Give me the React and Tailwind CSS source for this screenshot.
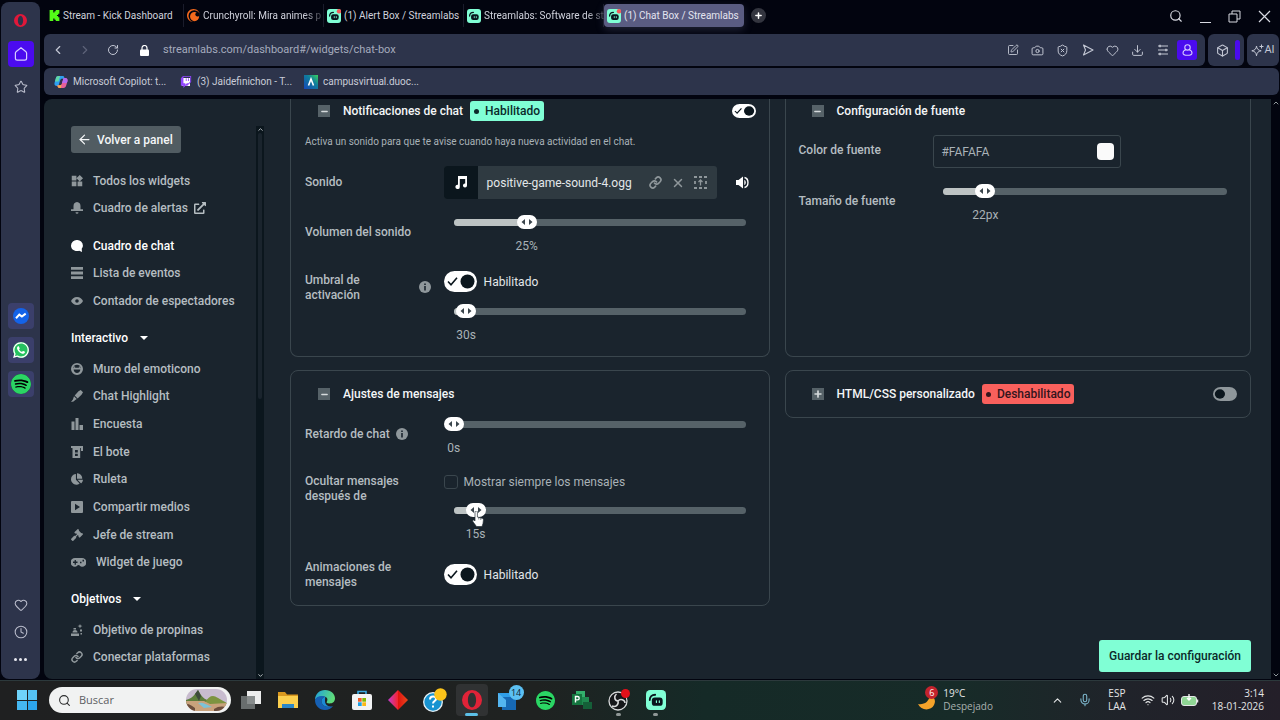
import { useState } from 'react'
import { SiKick, SiCrunchyroll, SiTwitch, SiSpotify } from 'react-icons/si'
import { FaChartPie, FaGavel, FaExternalLinkAlt, FaWhatsapp } from 'react-icons/fa'
import { MdWidgets } from 'react-icons/md'
import {
  ArrowLeft, Box, Camera, ChevronLeft, ChevronRight, ChevronUp, ChevronDown, Clock, Download, Heart,
  Link, Mic, Minus, Plus, RotateCw, Search, ShieldX, SquarePen, Star, Volume2, Wifi, X,
} from 'lucide-react'

/* ---------- Icons ---------- */

function OperaIcon({ size, color = '#e0183a' }) {
  return (
    <svg width={size} height={size} viewBox="0 0 24 24" fill={color} fillRule="evenodd">
      <path d="M12 0a12 12 0 1 0 0 24a12 12 0 1 0 0-24zM12 3.2c3 0 4.9 4 4.9 8.8s-1.900 8.800-4.900 8.800s-4.900-4-4.900-8.800s1.900-8.800 4.900-8.800z" />
    </svg>
  )
}

function StreamlabsIcon({ size, dot }) {
  return (
    <svg width={size} height={size} viewBox="0 0 24 24" fill="none" className="shrink-0">
      <rect width="24" height="24" rx="5" fill="#80ffd5" />
      <path d="M4.500 12c0-4 2.500-6.300 6.500-6.300" stroke="#09161d" strokeWidth="2.200" strokeLinecap="round" />
      <rect x="7" y="9" width="13" height="10" rx="3.500" fill="#09161d" />
      <path d="M12.500 13v2M16 13v2" stroke="#80ffd5" strokeWidth="1.400" strokeLinecap="round" />
      {dot && <circle cx="20.500" cy="4" r="3.800" fill="#f25c5c" />}
    </svg>
  )
}

function CopilotIcon() {
  return (
    <svg width="14" height="14" viewBox="0 0 14 14" className="shrink-0">
      <path d="M4.500 1h4.200c1 0 1.400.7 1.700 1.700l.3 1H8c-1 0-1.500.6-1.800 1.500L4.400 11H3C.8 11 0 9.500.6 7.400l1.200-4C2.300 1.700 3 1 4.500 1z" fill="#2f9ff0" />
      <path d="M1 6.500L1.800 3.400C2.300 1.700 3 1 4.500 1h1.700L4.500 6.500z" fill="#62d6a6" />
      <path d="M9.500 13H5.300c-1 0-1.400-.7-1.700-1.700l-.3-1H6c1 0 1.500-.6 1.800-1.500L9.600 3H11c2.200 0 3 1.500 2.400 3.600l-1.200 4c-.5 1.700-1.200 2.400-2.700 2.400z" fill="#e65f9a" />
      <path d="M9.600 3H11c2.200 0 3 1.500 2.400 3.600L12.800 8H8z" fill="#b26af0" />
      <path d="M3.300 10.300H6c.8 0 1.300-.4 1.600-1L7 13H5.300c-1 0-1.400-.7-1.700-1.700z" fill="#f6a94c" />
    </svg>
  )
}

function CampusIcon() {
  return (
    <svg width="14" height="14" viewBox="0 0 14 14">
      <defs>
        <linearGradient id="campus" x1="0" y1="1" x2="1" y2="0">
          <stop offset="0" stopColor="#1646b8" />
          <stop offset="0.600" stopColor="#0f7f9c" />
          <stop offset="1" stopColor="#3bd35c" />
        </linearGradient>
      </defs>
      <rect width="14" height="14" fill="url(#campus)" />
      <path d="M4.500 10.500L7 4l2.500 6.500" fill="none" stroke="#fff" strokeWidth="1.600" />
    </svg>
  )
}

// small filled glyphs of the widget menu
const glyphs = {
  bell: <path d="M6 0a4 4 0 0 1 3.500 4v3.200H12V9H0V7.200h2.500V4A4 4 0 0 1 6 0zM4.500 10.200h3a1.500 1.500 0 0 1-3 0z" />,
  chat: <path d="M6 0a5.700 5.700 0 0 1 5.900 5.500c0 1.500-.5 2.400-1.200 3.300L11 12l-2.700-1.300C3.500 12 0 9.300 0 5.500A5.800 5.800 0 0 1 6 0z" />,
  list: <path d="M0 0h12v2.800H0zM0 4.600h12v2.800H0zM0 9.200h12v2.800H0z" />,
  eye: <path fillRule="evenodd" d="M6 2c3 0 5 1.800 6 4-1 2.200-3 4-6 4S1 8.200 0 6c1-2.200 3-4 6-4zM6 4.200a1.800 1.800 0 1 0 0 3.600a1.800 1.800 0 0 0 0-3.600z" />,
  smile: <path fillRule="evenodd" d="M6 0a6 6 0 1 0 0 12A6 6 0 0 0 6 0zM6 1.800a4.200 4.200 0 0 1 4 2.900H2a4.200 4.200 0 0 1 4-2.900zM2.500 3l2 1-2 1.200zM9.500 3l-2 1 2 1.200zM2.600 6.400h6.800c-.3 2.300-1.600 3.500-3.400 3.500s-3.100-1.200-3.400-3.500z" />,
  pen: <path d="M7.500 1.300L9.700 0 12 2.300 10.500 4.700 6.600 8.400 3.700 5.400zM3 6.200l2.800 2.800-1.600.9L2.500 11.500 0 12l1.900-2.400z" />,
  poll: <path d="M.5 3.500h3V12h-3zM4.500 0h3v12h-3zM8.500 7H12v5H8.500z" />,
  jar: <path fillRule="evenodd" d="M0 0h12v5h-2v-3H9.200V12H1.500V2H0zM4 4v2.500h2.800V4zM4 7.700V10h2.800V7.700z" />,
  media: <path fillRule="evenodd" d="M1 0h10a1 1 0 0 1 1 1v10a1 1 0 0 1-1 1H1a1 1 0 0 1-1-1V1a1 1 0 0 1 1-1zM4 2.800v6.400L9 6z" />,
  goal: <path d="M0 9.500h8V12H0zM1.500 8.500a2.500 2.500 0 0 1 5 0zM9 0l.7 1.600L11.500 2l-1.800.8L9 4.500l-.7-1.700L6.500 2l1.800-.4zM9 5.500h2v2H9zM2.500 4h2.500v1.500H2.500zM9.500 9h1.500v1.500H9.500z" />,
}

function Glyph({ name }) {
  return (
    <svg width="12" height="12" viewBox="0 0 12 12" fill="currentColor" className="shrink-0">
      {glyphs[name]}
    </svg>
  )
}

function GamepadGlyph() {
  return (
    <svg width="15" height="9" viewBox="0 0 15 9" className="shrink-0">
      <path fillRule="evenodd" fill="currentColor" d="M4 0h7a4.300 4.300 0 0 1 0 8.800C9.500 8.800 8.700 7 7.500 7S5.500 8.800 4 8.800A4.300 4.300 0 0 1 4 0zM3.600 2v1.600H2v1.500h1.600v1.600h1.300V5.100h1.600V3.600H4.900V2zM11.500 1.800v1.600h1.500V1.800zM9 3.700v1.600h1.500V3.700z" />
    </svg>
  )
}

function UploadGlyph() {
  return (
    <svg width="13" height="13" viewBox="0 0 13 13" fill="none" stroke="currentColor" strokeWidth="1.800">
      <path d="M0 1h3M5 1h3M10 1h3M0 12h3M5 12h3M10 12h3M1 5v3M12 5v3" />
      <path d="M6.500 9.500V4.500M4.500 6l2-2 2 2" strokeWidth="1.300" />
    </svg>
  )
}

function HandCursor() {
  return (
    <svg width="12" height="16" viewBox="0 0 12 16" className="absolute left-1/2 top-2 z-10 -translate-x-1/3 pointer-events-none">
      <path d="M3 1a1.200 1.200 0 0 1 2.400 0v5l4.600 1.200c1 .3 1.500.9 1.400 2L11 12.500 10 15.500H4.500L1 10.800C.3 9.600 1 8.700 2 9l1 .9z" fill="#fff" stroke="#26323a" strokeWidth=".7" />
      <path d="M6.800 6.500v2M8.800 7v2" stroke="#26323a" strokeWidth=".6" />
    </svg>
  )
}

/* ---------- Form controls ---------- */

function Toggle({ id, small, on, onChange, label }) {
  return (
    <span className="relative inline-flex shrink-0">
      <input id={id} type="checkbox" checked={on} onChange={onChange} aria-label={label} className="peer absolute inset-0 h-full w-full cursor-pointer opacity-0" />
      <svg className={small ? 'h-[14px] w-6 pointer-events-none' : 'h-[21px] w-[33px] pointer-events-none'} viewBox="0 0 33 21" preserveAspectRatio="none">
        <rect width="33" height="21" rx="10.500" fill={on ? '#fff' : '#8f979b'} />
        {on && <path d="M4 10.500l3 3.200 6-7" fill="none" stroke="#0b161d" strokeWidth="1.600" />}
        <circle cx={on ? 23.500 : 9.500} cy="10.500" r="7" fill="#0b161d" />
      </svg>
    </span>
  )
}

function Slider({ id, start, unit, max, cursor }) {
  const [value, setValue] = useState(start)
  const left = `${(value / max) * 100}%`
  return (
    <div className="relative px-[10px]">
      <input id={id} type="range" min="0" max={max} value={value} onChange={(e) => setValue(Number(e.target.value))} className="absolute inset-x-0 top-0 z-20 h-[14px] w-full cursor-pointer opacity-0" />
      <div className="relative flex h-[14px] items-center">
        <div className="h-[7px] w-full overflow-hidden rounded-full bg-[#566268]">
          <div className="h-full bg-[#bdc3c3]" style={{ width: left }} />
        </div>
        <div className="absolute flex h-[14px] w-5 -translate-x-1/2 items-center justify-center rounded-full bg-white" style={{ left }}>
          <svg width="12" height="6" viewBox="0 0 12 6" fill="#3a454c">
            <path d="M4 0v6L0.500 3zM8 0v6l3.500-3z" />
          </svg>
          {cursor && <HandCursor />}
        </div>
      </div>
      <div className="relative mt-[10px] h-[14px]">
        <output htmlFor={id} className="absolute -translate-x-1/2 text-xs leading-[15px] text-[#a9b2b7]" style={{ left }}>
          {value}{unit}
        </output>
      </div>
    </div>
  )
}

function InfoDot() {
  return (
    <svg width="12" height="12" viewBox="0 0 12 12" className="shrink-0">
      <circle cx="6" cy="6" r="6" fill="#8f979b" />
      <path d="M5.200 2.500h1.600v1.500H5.200zM5.200 5h1.600v4.500H5.200z" fill="#1a242d" />
    </svg>
  )
}

function CardHeader({ title, open = true, badge, badgeOn, children }) {
  return (
    <div className="flex h-6 items-center pl-[13px]">
      <button type="button" aria-label={title} className="flex h-3 w-3 items-center justify-center bg-[#566268] text-[#d5dadc]">
        {open ? <Minus size={9} strokeWidth={4} /> : <Plus size={10} strokeWidth={4} />}
      </button>
      <h2 className="ml-[13px] text-xs font-medium text-[#f4f6f7]">{title}</h2>
      {badge && (
        <span className={badgeOn ? 'ml-[7px] flex h-5 items-center gap-[6px] rounded-[3px] bg-[#80ffd5] px-1 text-xs font-medium text-[#0b2a2a]' : 'ml-[7px] flex h-5 items-center gap-[6px] rounded-[3px] bg-[#f9605c] px-1 text-xs font-medium text-[#33151c]'}>
          <i className="h-[5px] w-[5px] rounded-full bg-current" />
          {badge}
        </span>
      )}
      <span className="ml-auto flex">{children}</span>
    </div>
  )
}

const rowClass = 'grid grid-cols-[4fr_9fr]'
const labelClass = 'text-xs font-medium leading-[15px] text-[#b5bdc1]'

/* ---------- Browser chrome ---------- */

const tabs = [
  { icon: <SiKick size={11} color="#53fc18" className="ml-[2px] shrink-0" />, title: 'Stream - Kick Dashboard' },
  { icon: <SiCrunchyroll size={13} color="#f4691d" className="shrink-0" />, title: 'Crunchyroll: Mira animes p', faded: true },
  { icon: <StreamlabsIcon size={14} dot />, title: '(1) Alert Box / Streamlabs' },
  { icon: <StreamlabsIcon size={14} />, title: 'Streamlabs: Software de st', faded: true },
  { icon: <StreamlabsIcon size={14} dot />, title: '(1) Chat Box / Streamlabs', active: true },
]

function TabBar() {
  return (
    <div className="flex h-[34px] items-start pt-1">
      {tabs.map((tab) => (
        <button
          key={tab.title}
          type="button"
          className={tab.active
            ? 'flex h-[23px] w-[140px] items-center gap-[3px] rounded bg-[#5a5c82] pl-[3px] text-[#e4e5f0] shadow-[0_3px_8px_#5a5c8255]'
            : 'flex h-[23px] w-[140px] items-center gap-[3px] border-r border-[#1a1c2b] pl-[3px] text-[#d0d2dc]'}
        >
          {tab.icon}
          <span className={tab.faded
            ? 'whitespace-nowrap text-[10px] [mask-image:linear-gradient(to_right,#000_85%,#0004)]'
            : 'whitespace-nowrap text-[10px]'}
          >
            {tab.title}
          </span>
        </button>
      ))}
      <button type="button" aria-label="Nueva pestaña" className="ml-[7px] mt-1 flex h-[15px] w-[15px] items-center justify-center rounded-full bg-[#33353f] text-white">
        <Plus size={9} strokeWidth={4} />
      </button>
      <div className="ml-auto mr-[9px] mt-[5px] flex items-center gap-[17px] text-[#d8dae2]">
        <button type="button" aria-label="Buscar"><Search size={14} /></button>
        <button type="button" aria-label="Minimizar" className="flex h-[13px] items-end"><span className="h-px w-[11px] bg-[#d8dae2]" /></button>
        <button type="button" aria-label="Restaurar">
          <svg width="13" height="13" viewBox="0 0 13 13" fill="none" stroke="currentColor">
            <path d="M1 4h8v8H1zM4 4V1h8v8H9" />
          </svg>
        </button>
        <button type="button" aria-label="Cerrar">
          <svg width="13" height="13" viewBox="0 0 13 13" stroke="currentColor" strokeWidth="1.200"><path d="M1 1l11 11M12 1L1 12" /></svg>
        </button>
      </div>
    </div>
  )
}

function AddressBar() {
  const actions = [
    ['Editar', <SquarePen size={12} strokeWidth={1.8} />],
    ['Captura', <Camera size={13} strokeWidth={1.8} />],
    ['Bloqueador', <ShieldX size={13} strokeWidth={1.8} />],
    ['Flow', (
      <svg width="12" height="12" viewBox="0 0 12 12" fill="none" stroke="currentColor" strokeWidth="1.100" strokeLinejoin="round">
        <path d="M1.500 1L11 6l-9.500 5L3.500 6z" />
      </svg>
    )],
    ['Favorito', <Heart size={13} strokeWidth={1.8} />],
    ['Descargas', <Download size={13} strokeWidth={1.8} />],
    ['Ajustes', (
      <svg width="12" height="12" viewBox="0 0 12 12" fill="none" stroke="currentColor" strokeWidth="1.200">
        <path d="M1 2h10M1 6h10M1 10h10" />
        <path d="M3 .800v2.400M9 4.800v2.400M3 8.800v2.400" strokeWidth="1.500" />
      </svg>
    )],
  ]
  return (
    <div className="mr-px flex h-8 gap-[3px] text-[#c3c7d4]">
      <div className="flex flex-1 items-center rounded-md bg-[#2d344b] pl-[7px] pr-2">
        <button type="button" aria-label="Atrás"><ChevronLeft size={14} /></button>
        <button type="button" aria-label="Adelante" className="ml-[13px] text-[#5d6379]"><ChevronRight size={14} /></button>
        <button type="button" aria-label="Recargar" className="ml-[15px]"><RotateCw size={12} /></button>
        <svg width="9" height="11" viewBox="0 0 9 11" className="ml-[21px] shrink-0">
          <path d="M2 5V3a2.500 2.500 0 0 1 5 0v2" fill="none" stroke="#fff" strokeWidth="1.200" />
          <rect y="4.500" width="9" height="6.500" rx="1" fill="#fff" />
        </svg>
        <input aria-label="Dirección" defaultValue="streamlabs.com/dashboard#/widgets/chat-box" className="ml-[14px] min-w-0 flex-1 bg-transparent text-[11px] text-[#a5abbd] outline-none" />
        <div className="flex">
          {actions.map(([name, icon]) => (
            <button key={name} type="button" aria-label={name} className="flex w-[25px] justify-center">{icon}</button>
          ))}
        </div>
        <button type="button" aria-label="Perfil" className="ml-[2px] flex h-5 w-5 items-center justify-center rounded-[3px] bg-[#4b0bef]">
          <svg width="11" height="12" viewBox="0 0 11 12" fill="none" stroke="#d6ccff" strokeWidth="1.100">
            <circle cx="5.500" cy="3.400" r="2.700" />
            <path d="M3.800 5.800C2 6.300 1 7.500 1 9c0 1.700 1.500 2.300 4.500 2.300S10 10.700 10 9c0-1.500-1-2.700-2.800-3.200" />
          </svg>
        </button>
      </div>
      <div className="flex w-9 items-center justify-between rounded-md bg-[#2d344b] pl-2 pr-1">
        <Box size={13} />
        <span className="h-5 w-[5px] rounded-sm bg-[#4b0bef]" />
      </div>
      <button type="button" className="flex w-8 items-center justify-center rounded-md bg-[#2d344b] text-[11px]">
        <svg width="13" height="13" viewBox="0 0 13 13" fill="none" stroke="currentColor" strokeLinejoin="round" className="shrink-0">
          <path d="M5.500 2c.4 3 1.500 4.200 4.700 4.800-3.200.6-4.300 1.800-4.700 5-.4-3.200-1.500-4.400-4.700-5C4 6.200 5.100 5 5.500 2z" />
          <path d="M10.500.5v4M8.500 2.500h4" />
        </svg>
        AI
      </button>
    </div>
  )
}

function BookmarkBar() {
  return (
    <nav className="mr-px mt-0.5 flex h-[27px] items-center rounded-md bg-[#2d344b] pl-[10px] text-[10px] text-[#c9ccd8]">
      <a href="#copilot" className="flex w-[126px] items-center gap-[5px]"><CopilotIcon />Microsoft Copilot: t...</a>
      <a href="#twitch" className="flex w-[124px] items-center gap-[5px]">
        <span className="relative flex items-center justify-center text-[#9146ff]">
          <span className="absolute h-2 w-2 bg-white" />
          <SiTwitch size={12} className="relative" />
        </span>
        (3) Jaidefinichon - T...
      </a>
      <a href="#campus" className="flex items-center gap-[5px]"><CampusIcon />campusvirtual.duoc...</a>
    </nav>
  )
}

function OperaSidebar() {
  const tile = 'flex h-[26px] w-[26px] items-center justify-center rounded bg-[#3b3f6b]'
  return (
    <aside className="ml-px mt-0.5 mb-px flex w-[39px] flex-col items-center justify-between rounded-lg bg-[#2d344b] pb-[13px] pt-3 text-[#b9bccb]">
      <div className="flex flex-col items-center">
        <OperaIcon size={13} />
        <button type="button" aria-label="Inicio" className="mt-[14px] flex h-[26px] w-[26px] items-center justify-center rounded bg-[#4b0bef] text-[#d6ccff]">
          <svg width="14" height="14" viewBox="0 0 14 14" fill="none" stroke="currentColor" strokeWidth="1.200">
            <path d="M7 .8l5 4c.4.4.6.8.6 1.300v5.200c0 1.200-.7 1.900-1.900 1.900H3.300c-1.200 0-1.900-.7-1.900-1.900V6.100c0-.5.200-.9.600-1.300z" />
          </svg>
        </button>
        <button type="button" aria-label="Espacios" className="mt-[13px]"><Star size={14} strokeWidth={1.8} /></button>
      </div>
      <div className="flex flex-col gap-2 pt-2">
        <button type="button" aria-label="Messenger" className={tile}>
          <svg width="16" height="16" viewBox="0 0 16 16">
            <circle cx="8" cy="8" r="8" fill="#1463e8" />
            <path d="M3 10.200l3.300-3.600 2.600 2 3.800-3" fill="none" stroke="#fff" strokeWidth="2" />
          </svg>
        </button>
        <button type="button" aria-label="WhatsApp" className={tile}>
          <span className="flex h-4 w-4 items-center justify-center rounded-full bg-[#25c25f] text-white"><FaWhatsapp size={18} className="shrink-0" /></span>
        </button>
        <button type="button" aria-label="Spotify" className={tile}>
          <span className="rounded-full bg-black"><SiSpotify size={20} color="#2bd564" /></span>
        </button>
      </div>
      <div className="flex flex-col items-center gap-[13px]">
        <button type="button" aria-label="Favoritos"><Heart size={14} strokeWidth={1.8} /></button>
        <button type="button" aria-label="Historial"><Clock size={14} strokeWidth={1.8} /></button>
        <button type="button" aria-label="Más" className="flex h-[14px] items-center gap-[2px]">
          <i className="h-[3px] w-[3px] rounded-full bg-[#e8e9f0]" />
          <i className="h-[3px] w-[3px] rounded-full bg-[#e8e9f0]" />
          <i className="h-[3px] w-[3px] rounded-full bg-[#e8e9f0]" />
        </button>
      </div>
    </aside>
  )
}

/* ---------- Widget menu ---------- */

function MenuItem({ icon, active, children }) {
  return (
    <a href="#widget" className={active ? 'flex items-center gap-[10px] text-white' : 'flex items-center gap-[10px] text-[#b5bdc1]'}>
      <span className={active ? 'flex' : 'flex text-[#8f979b]'}>{icon}</span>
      <span className="flex items-center gap-[6px]">{children}</span>
    </a>
  )
}

function MenuHeading({ children }) {
  return (
    <button type="button" className="mt-[10px] flex h-[26px] items-center gap-3 text-white">
      {children}
      <svg width="8" height="4" viewBox="0 0 8 4" fill="currentColor"><path d="M0 0h8L4 4z" /></svg>
    </button>
  )
}

function WidgetMenu() {
  return (
    <div className="flex w-[220px] shrink-0 pl-[27px] pt-[27px]">
      <nav className="flex flex-1 flex-col items-start whitespace-nowrap text-xs font-medium">
        <button type="button" className="flex h-[27px] items-center gap-[5px] rounded-[3px] bg-[#515c62] pl-[6px] pr-2 text-[#f4f6f7]">
          <ArrowLeft size={15} />Volver a panel
        </button>
        <div className="mt-[14px] grid h-[55px] auto-rows-fr">
          <MenuItem icon={<MdWidgets size={14} className="-mx-px" />}>Todos los widgets</MenuItem>
          <MenuItem icon={<Glyph name="bell" />}>Cuadro de alertas <FaExternalLinkAlt size={12} /></MenuItem>
        </div>
        <div className="mt-[10px] grid h-[83px] auto-rows-fr">
          <MenuItem active icon={<Glyph name="chat" />}>Cuadro de chat</MenuItem>
          <MenuItem icon={<Glyph name="list" />}>Lista de eventos</MenuItem>
          <MenuItem icon={<Glyph name="eye" />}>Contador de espectadores</MenuItem>
        </div>
        <MenuHeading>Interactivo</MenuHeading>
        <div className="mt-1 grid h-[221px] auto-rows-fr">
          <MenuItem icon={<Glyph name="smile" />}>Muro del emoticono</MenuItem>
          <MenuItem icon={<Glyph name="pen" />}>Chat Highlight</MenuItem>
          <MenuItem icon={<Glyph name="poll" />}>Encuesta</MenuItem>
          <MenuItem icon={<Glyph name="jar" />}>El bote</MenuItem>
          <MenuItem icon={<FaChartPie size={12} />}>Ruleta</MenuItem>
          <MenuItem icon={<Glyph name="media" />}>Compartir medios</MenuItem>
          <MenuItem icon={<FaGavel size={12} />}>Jefe de stream</MenuItem>
          <MenuItem icon={<GamepadGlyph />}>Widget de juego</MenuItem>
        </div>
        <MenuHeading>Objetivos</MenuHeading>
        <div className="mt-1 grid h-[55px] auto-rows-fr">
          <MenuItem icon={<Glyph name="goal" />}>Objetivo de propinas</MenuItem>
          <MenuItem icon={<Link size={12} strokeWidth={3} />}>Conectar plataformas</MenuItem>
        </div>
      </nav>
      <div className="flex w-2 flex-col items-center justify-between bg-[#0b161d] text-[#c9cfd2]">
        <ChevronUp size={7} strokeWidth={3} />
        <div className="mb-auto h-[266px] w-1 rounded-full bg-[#1a242d]" />
        <ChevronDown size={7} strokeWidth={3} />
      </div>
    </div>
  )
}

/* ---------- Settings ---------- */

function Settings() {
  const [sound, setSound] = useState(true)
  const [threshold, setThreshold] = useState(true)
  const [animations, setAnimations] = useState(true)
  const [custom, setCustom] = useState(false)

  return (
    <main className="flex min-w-0 flex-1 flex-col pl-[26px] pr-5">
      <div className="grid grid-cols-[479fr_466fr] gap-x-[15px] gap-y-[13px]">
        <section className="rounded-b-lg border border-t-0 border-[#3a464d] pb-[14px] pl-[14px] pr-[13px]">
          <CardHeader title="Notificaciones de chat" badge="Habilitado" badgeOn>
            <Toggle small label="Notificaciones de chat" on={sound} onChange={() => setSound(!sound)} />
          </CardHeader>
          <p className="mt-[11px] text-[10px] leading-4 text-[#a9b2b7]">
            Activa un sonido para que te avise cuando haya nueva actividad en el chat.
          </p>
          <div className={`${rowClass} mt-4 items-center`}>
            <span className={labelClass}>Sonido</span>
            <div className="flex items-center justify-between pr-1">
              <div className="flex h-[33px] w-[273px] items-center overflow-hidden rounded-[3px] bg-[#2f3a41] pr-[10px] text-[#8f979b]">
                <span className="flex h-full w-[34px] items-center justify-center bg-[#0b161d] text-white">
                  <svg width="13" height="13" viewBox="0 0 13 13" fill="currentColor">
                    <path d="M4 0h9v9.500a2 2 0 1 1-1.800-2V3H5.800v7.800A2.200 2.200 0 1 1 4 8.700z" />
                  </svg>
                </span>
                <span className="ml-[9px] mr-auto text-xs text-[#e3e7e9]">positive-game-sound-4.ogg</span>
                <div className="flex items-center gap-[9px]">
                  <button type="button" aria-label="Copiar enlace"><Link size={13} strokeWidth={3} /></button>
                  <button type="button" aria-label="Quitar"><X size={14} strokeWidth={2.5} /></button>
                  <button type="button" aria-label="Subir archivo"><UploadGlyph /></button>
                </div>
              </div>
              <button type="button" aria-label="Reproducir" className="mr-[3px] text-white">
                <svg width="13" height="13" viewBox="0 0 13 13" fill="currentColor">
                  <path d="M0 4h2.500L7 .500v12L2.500 9H0z" />
                  <path d="M8.500 1.500c4.600 1 4.600 9 0 10" fill="none" stroke="currentColor" strokeWidth="1.400" />
                  <path d="M8.300 4c2 .5 2 4.500 0 5z" />
                </svg>
              </button>
            </div>
          </div>
          <div className={`${rowClass} mt-4`}>
            <label htmlFor="volume" className={`${labelClass} pt-[10px]`}>Volumen del sonido</label>
            <Slider id="volume" start={25} max={100} unit="%" />
          </div>
          <div className={`${rowClass} mt-[18px]`}>
            <div className="flex justify-between pr-[13px]">
              <label htmlFor="threshold" className={`${labelClass} w-20 pt-0.5`}>Umbral de activación</label>
              <span className="pt-[10px]"><InfoDot /></span>
            </div>
            <div>
              <div className="flex h-[21px] items-center gap-[7px]">
                <Toggle id="threshold" on={threshold} onChange={() => setThreshold(!threshold)} />
                <label htmlFor="threshold" className="text-xs text-[#e3e7e9]">Habilitado</label>
              </div>
              <div className="mt-3"><Slider id="threshold-time" start={30} max={700} unit="s" /></div>
            </div>
          </div>
        </section>

        <section className="rounded-b-lg border border-t-0 border-[#3a464d] px-[13px]">
          <CardHeader title="Configuración de fuente" />
          <div className={`${rowClass} mt-3`}>
            <label htmlFor="color" className={`${labelClass} pt-2`}>Color de fuente</label>
            <div className="flex h-[33px] w-[188px] items-center rounded-[3px] border border-[#3a464d] pl-[7px] pr-[6px]">
              <input id="color" defaultValue="#FAFAFA" className="min-w-0 flex-1 bg-transparent text-xs text-[#a9b2b7] outline-none" />
              <span className="h-[17px] w-[17px] rounded-sm bg-[#fafafa]" />
            </div>
          </div>
          <div className={`${rowClass} mt-4`}>
            <label htmlFor="size" className={`${labelClass} pt-[10px]`}>Tamaño de fuente</label>
            <Slider id="size" start={22} max={149} unit="px" />
          </div>
        </section>

        <section className="rounded-lg border border-[#3a464d] pb-[15px] pl-[14px] pr-[13px] pt-[11px]">
          <CardHeader title="Ajustes de mensajes" />
          <div className={`${rowClass} mt-[11px]`}>
            <label htmlFor="delay" className={`${labelClass} flex items-start gap-[6px] pt-[10px]`}>
              Retardo de chat <span className="pt-px"><InfoDot /></span>
            </label>
            <Slider id="delay" start={0} max={200} unit="s" />
          </div>
          <div className={`${rowClass} mt-[18px]`}>
            <label htmlFor="hide" className={`${labelClass} w-28 pt-px`}>Ocultar mensajes después de</label>
            <div>
              <div className="flex h-[18px] items-center gap-[6px]">
                <input id="always" type="checkbox" className="h-[14px] w-[14px] appearance-none rounded-[3px] border border-[#3a464d] checked:bg-[#80ffd5]" />
                <label htmlFor="always" className="text-xs text-[#a9b2b7]">Mostrar siempre los mensajes</label>
              </div>
              <div className="mt-3"><Slider id="hide" start={15} max={200} unit="s" cursor /></div>
            </div>
          </div>
          <div className={`${rowClass} mt-[18px] items-center`}>
            <label htmlFor="animations" className={`${labelClass} w-24 pt-px`}>Animaciones de mensajes</label>
            <div className="flex items-center gap-[7px]">
              <Toggle id="animations" on={animations} onChange={() => setAnimations(!animations)} />
              <label htmlFor="animations" className="text-xs text-[#e3e7e9]">Habilitado</label>
            </div>
          </div>
        </section>

        <section className="self-start rounded-lg border border-[#3a464d] px-[13px] py-[11px]">
          <CardHeader title="HTML/CSS personalizado" open={false} badge="Deshabilitado">
            <Toggle small label="HTML/CSS personalizado" on={custom} onChange={() => setCustom(!custom)} />
          </CardHeader>
        </section>
      </div>
      <button type="button" className="mb-[7px] mt-auto h-8 self-end rounded-[3px] bg-[#80ffd5] px-[10px] text-xs font-medium text-[#0b2a2a]">
        Guardar la configuración
      </button>
    </main>
  )
}

/* ---------- Taskbar ---------- */

const apps = [
  { name: 'Vista de tareas', icon: (
    <svg width="20" height="20" viewBox="0 0 20 20"><rect x="6" y="1" width="14" height="13" fill="#eceded" /><rect x="0" y="6" width="14" height="13" fill="#777b7b" opacity=".85" /></svg>
  ) },
  { name: 'Explorador', icon: (
    <svg width="20" height="18" viewBox="0 0 20 18"><path d="M0 1h7l2 2.500h11V8H0z" fill="#d9981f" /><path d="M0 5h20v12H0z" fill="#fbcf4e" /><path d="M4 17v-4h12v4z" fill="#2b87c9" /></svg>
  ) },
  { name: 'Edge', icon: (
    <svg width="20" height="20" viewBox="0 0 20 20">
      <defs>
        <linearGradient id="edge" x1="0" y1="0" x2="1" y2="0.300">
          <stop offset="0" stopColor="#1e9fe0" />
          <stop offset="1" stopColor="#5fdc7a" />
        </linearGradient>
      </defs>
      <path d="M0 10C0 4 4.500 0 10 0c6 0 10 4 10 8.300 0 3.500-2.500 5.200-5.500 5.200-2.500 0-3.500-1-2.500-2.300 1-1.400.5-4.700-4-4.700C4 6.500 1 8 0 10z" fill="url(#edge)" />
      <path d="M0 10c.8-2.500 3.500-4 7-4 1.500 0 2.500.3 3.300.8C8 7 6.500 9 6.500 11c0 4 4 7.500 11.500 5-1.800 2.600-4.500 4-8 4C4 20 0 15.500 0 10z" fill="#1660b4" />
      <path d="M6.500 11c0 4 4 7.500 11.500 5-2 1-8 .5-8-5 0-2 .3-3.500.3-4.200C8 7 6.500 9 6.500 11z" fill="#1c8ad6" />
    </svg>
  ) },
  { name: 'Store', icon: (
    <svg width="20" height="20" viewBox="0 0 20 20"><path d="M6 4V1.500h8V4" fill="none" stroke="#3aa9e0" strokeWidth="1.600" /><rect y="4" width="20" height="16" rx="2" fill="#f2f3f4" /><path d="M6 8h3.700v3.700H6z" fill="#f05a28" /><path d="M10.300 8H14v3.700h-3.700z" fill="#7fba00" /><path d="M6 12.300h3.700V16H6z" fill="#1ea0e6" /><path d="M10.300 12.300H14V16h-3.700z" fill="#fcb714" /></svg>
  ) },
  { name: 'Rombo', icon: (
    <svg width="20" height="20" viewBox="0 0 20 20">
      <defs>
        <linearGradient id="diamond" x1="0" y1="0" x2="1" y2="0">
          <stop offset="0" stopColor="#c13bd0" />
          <stop offset="0.500" stopColor="#f5252c" />
          <stop offset="0.520" stopColor="#e0140f" />
          <stop offset="1" stopColor="#e8481c" />
        </linearGradient>
      </defs>
      <path d="M10 0l10 10-10 10L0 10z" fill="url(#diamond)" />
    </svg>
  ) },
  { name: 'Ayuda', icon: (
    <svg width="24" height="24" viewBox="0 0 24 24"><circle cx="10" cy="14" r="9.300" fill="#1793d1" stroke="#e6f1f7" strokeWidth="1.300" /><path d="M7 11.500c0-4 6-4 6-.5 0 2-3 2.200-3 4.500M10 17.500v2" fill="none" stroke="#fff" strokeWidth="2" /><circle cx="17.500" cy="6.500" r="6.200" fill="#fcc41a" /></svg>
  ) },
  { name: 'Opera', active: true, mark: 'blue', icon: <OperaIcon size={20} color="#e02338" /> },
  { name: 'Correo', icon: (
    <span className="relative">
      <svg width="22" height="22" viewBox="0 0 22 22"><path d="M0 4h14v12H0z" fill="#2f9ee8" /><path d="M4 8h14v13H4z" fill="#1769b5" /><path d="M0 4l8 7v7H0z" fill="#54b5f0" /></svg>
      <span className="absolute -right-1 -top-1 flex h-[15px] w-[15px] items-center justify-center rounded-full bg-[#5cc0f2] text-[9px] text-[#10222e]">14</span>
    </span>
  ) },
  { name: 'Spotify', icon: <span className="rounded-full bg-black"><SiSpotify size={19} color="#2bd564" /></span> },
  { name: 'Project', icon: (
    <svg width="20" height="20" viewBox="0 0 20 20"><path d="M4 1h9v9H4z" fill="#33b06c" /><path d="M7 7h10v8H7z" fill="#1f8a50" /><path d="M11 12h9v7h-9z" fill="#155f38" /><rect y="4" width="10" height="11" fill="#14753f" /><path d="M3.500 12.500V6.500h2a1.700 1.700 0 0 1 0 3.400h-2" fill="none" stroke="#fff" strokeWidth="1.400" /></svg>
  ) },
  { name: 'OBS', mark: 'gray', icon: (
    <svg width="22" height="22" viewBox="0 0 22 22"><circle cx="10" cy="12" r="9" fill="#15171a" stroke="#d8dadb" strokeWidth="1.300" /><path d="M10 12c-4-.5-4-5-1.500-7M10 12c2.500-3 7-1 7 2M10 12c1 4-2.500 6.500-6 5" fill="none" stroke="#d8dadb" strokeWidth="1.500" /><circle cx="17.500" cy="4.500" r="4.500" fill="#e3101a" /></svg>
  ) },
  { name: 'Streamlabs', mark: 'gray', icon: <StreamlabsIcon size={20} /> },
]

function Taskbar() {
  return (
    <footer className="flex h-10 shrink-0 items-center border-t border-[#2c393c] bg-[linear-gradient(to_right,#1f2021_0%,#1f2221_42%,#152a27_55%,#172b28_75%,#20232a_88%,#241f29_100%)] pb-px pl-[17px] pr-4 text-[10px] text-[#e4e6e7]">
      <button type="button" aria-label="Inicio" className="grid h-5 w-5 grid-cols-2 gap-px">
        <i className="bg-[#6fd3fa]" /><i className="bg-[#55c3f5]" /><i className="bg-[#45b8f2]" /><i className="bg-[#2ca5ec]" />
      </button>
      <div className="ml-3 flex h-[26px] w-[182px] items-center rounded-full bg-[#f1f2f2] pl-[9px] pr-1 text-[#2b2c2d]">
        <Search size={13} />
        <input aria-label="Buscar" placeholder="Buscar" className="ml-2 min-w-0 flex-1 bg-transparent text-[11px] outline-none placeholder:text-[#5d6062]" />
        <svg width="41" height="22" viewBox="0 0 41 22">
          <defs><clipPath id="island"><rect width="41" height="22" rx="11" /></clipPath></defs>
          <g clipPath="url(#island)">
            <rect width="41" height="22" fill="#c8bccf" />
            <path d="M0 11c4-1 7-3 9-6l3-4 3 5c2 3 5 5 8 5v4H0z" fill="#5d7d3c" />
            <path d="M9 5l3-4 3 6-2 5z" fill="#3d4a3a" />
            <path d="M20 12c2-3 4-5 7-5s6 3 14 7v3H18z" fill="#7d9440" />
            <path d="M0 12h18l6 3 17-1v8H0z" fill="#c9a27c" />
            <path d="M12 14c5-1 7 1 14 4l-8 1z" fill="#7cc3d8" />
            <path d="M0 15c4 0 6 2 9 4v3H0zM28 20c4-3 8-3 13-2v4H28z" fill="#6b4d3c" />
          </g>
        </svg>
      </div>
      <div className="ml-[2px] flex h-full w-[441px] items-center">
        {apps.map((app) => (
          <button key={app.name} type="button" aria-label={app.name} className="flex h-full flex-1 items-center justify-center">
            <span className={app.active ? 'relative flex h-8 w-8 items-center justify-center rounded bg-[#303233]' : 'relative flex h-8 w-8 items-center justify-center'}>
              {app.icon}
              {app.mark && <i className={app.mark === 'blue' ? 'absolute bottom-0 h-[3px] w-[13px] rounded-full bg-[#5cc0e8]' : 'absolute bottom-0 h-[3px] w-[5px] rounded-full bg-[#8f9796]'} />}
            </span>
          </button>
        ))}
      </div>
      <div className="ml-auto flex items-center gap-[6px]">
        <span className="relative">
          <svg width="20" height="20" viewBox="0 0 20 20"><path d="M1 14c6 1 11-2 12-9 5 2 6 6 4 10-3 6-13 6-16-1z" fill="#f5a32a" /></svg>
          <span className="absolute -top-1 -right-px flex h-[13px] w-[13px] items-center justify-center rounded-full bg-[#c4232d] text-[9px] text-white">6</span>
        </span>
        <span className="leading-[13px]">19°C<br /><span className="text-[#a9b1af]">Despejado</span></span>
      </div>
      <ChevronUp size={13} className="ml-[58px]" />
      <Mic size={14} strokeWidth={1.8} className="ml-[14px] text-[#7fb9cf]" />
      <span className="ml-4 text-center leading-[13px]">ESP<br />LAA</span>
      <Wifi size={14} className="ml-[15px]" />
      <Volume2 size={14} strokeWidth={1.8} className="ml-[6px]" />
      <svg width="18" height="12" viewBox="0 0 18 12" className="ml-[6px]">
        <rect x=".5" y="2.500" width="15" height="9" rx="2.500" fill="#8fd694" stroke="#e4e6e7" />
        <path d="M16.500 5.500v3" stroke="#e4e6e7" strokeWidth="1.500" />
        <path d="M8 0v6M6 4l2 2 2-2" fill="none" stroke="#fff" strokeWidth="1.300" />
      </svg>
      <time className="ml-[13px] text-right leading-[13px]">3:14<br />18-01-2026</time>
    </footer>
  )
}

export default function App() {
  return (
    <div className="flex h-screen flex-col overflow-hidden bg-[#02040f] font-['Open_Sans',sans-serif]">
      <div className="flex min-h-0 flex-1 gap-1 font-[Roboto,sans-serif]">
        <OperaSidebar />
        <div className="flex min-w-0 flex-1 flex-col">
          <TabBar />
          <AddressBar />
          <BookmarkBar />
          <div className="mb-px mt-1 flex min-h-0 flex-1 overflow-hidden rounded-l-lg bg-[#1a242d]">
            <WidgetMenu />
            <Settings />
            <div className="flex w-[9px] flex-col items-center justify-between bg-[#02040f] text-[#8f979b]">
              <ChevronUp size={8} strokeWidth={3} />
              <ChevronDown size={8} strokeWidth={3} />
            </div>
          </div>
        </div>
      </div>
      <Taskbar />
    </div>
  )
}
